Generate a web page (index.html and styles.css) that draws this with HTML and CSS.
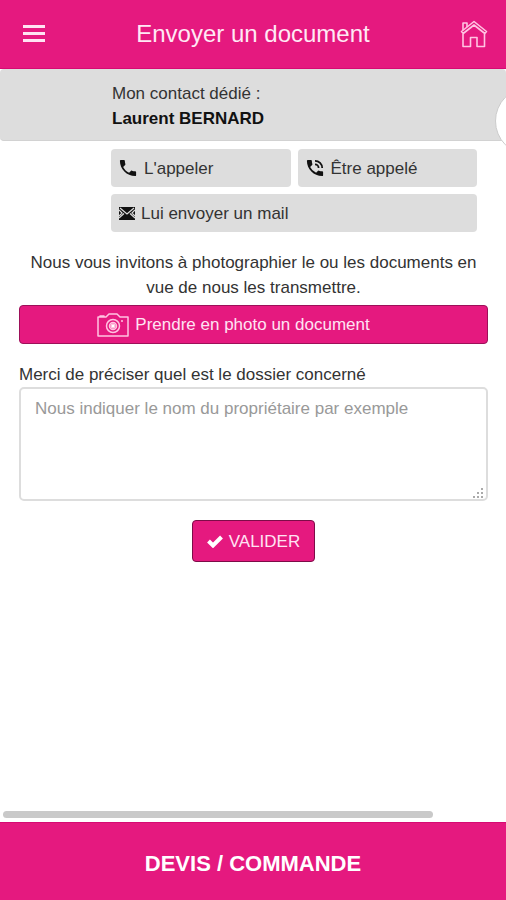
FILE: index.html
```html
<!DOCTYPE html>
<html lang="fr">
<head>
<meta charset="utf-8">
<meta name="viewport" content="width=device-width, initial-scale=1">
<title>Envoyer un document</title>
<link rel="stylesheet" href="styles.css">
</head>
<body>
<header class="topbar">
  <button class="icon-button" type="button" aria-label="Menu">
    <svg width="24" height="18" viewBox="0 0 24 18" fill="#ffe3f3"><path d="M1 0h22v3H1zM1 7h22v3H1zM1 14h22v3H1z"/></svg>
  </button>
  <h1 class="title">Envoyer un document</h1>
  <a class="icon-button" href="#" aria-label="Accueil">
    <svg width="28" height="28" viewBox="0 0 28 28" fill="none" stroke="#ffc4e2" stroke-width="1.6" stroke-linejoin="round"><path d="M3 14v12.500h7.500v-9h6.500v9h7.500V14"/><path d="M14 1.500 1.500 11.500l1.700 2L14 5l10.800 8.500 1.700-2z"/><path d="M3 10V3h4v4"/></svg>
  </a>
</header>
<main class="content">
  <section class="contact">
    <p class="contact-label">Mon contact dédié :</p>
    <p class="contact-name">Laurent BERNARD</p>
  </section>
  <span class="bubble"></span>
  <div class="actions">
    <button class="action" type="button">
      <svg width="18" height="18" viewBox="2 2 20 20" fill="#111"><path d="M6.620 10.790c1.440 2.830 3.760 5.140 6.590 6.590l2.200-2.200c.27-.27.67-.36 1.020-.24 1.120.37 2.330.57 3.570.57.55 0 1 .45 1 1V20c0 .55-.45 1-1 1C10.610 21 3 13.390 3 4c0-.55.45-1 1-1h3.500c.55 0 1 .45 1 1 0 1.250.2 2.450.57 3.570.11.35.03.74-.25 1.020z"/></svg>
      <span>L'appeler</span>
    </button>
    <button class="action" type="button">
      <svg width="18" height="18" viewBox="2 2 20 20" fill="#111"><path d="M20 15.500c-1.250 0-2.450-.2-3.570-.57a1 1 0 0 0-1.020.24l-2.200 2.200a15 15 0 0 1-6.590-6.590l2.200-2.200c.28-.27.36-.66.25-1.010A11.400 11.400 0 0 1 8.500 4c0-.55-.45-1-1-1H4c-.55 0-1 .45-1 1 0 9.390 7.610 17 17 17 .55 0 1-.45 1-1v-3.500c0-.55-.45-1-1-1zM19 12h2a9 9 0 0 0-9-9v2a7 7 0 0 1 7 7zm-4 0h2a5 5 0 0 0-5-5v2a3 3 0 0 1 3 3z"/></svg>
      <span>Être appelé</span>
    </button>
    <button class="action action-wide" type="button">
      <svg width="16" height="13" viewBox="0 0 16 13"><path fill="#111" d="M0 0h16v13H0z"/><path d="M1 1l7 6 7-6M0 11l5-4.500M16 11l-5-4.500M0 3l3 3-3 3M16 3l-3 3 3 3" fill="none" stroke="#ddd" stroke-width="1.200"/></svg>
      <span>Lui envoyer un mail</span>
    </button>
  </div>
  <form class="form">
    <p class="intro">Nous vous invitons à photographier le ou les documents en vue de nous les transmettre.</p>
    <button class="primary photo" type="button">
      <svg width="32" height="24" viewBox="0 0 32 24" fill="none" stroke="#ffc4e2" stroke-width="1.500" stroke-linejoin="round"><path d="M1 4h8l3-3h8l3 3h8v19H1zM3 4V3h4v1"/><circle cx="16" cy="13" r="6.500"/><circle cx="16" cy="13" r="3.500"/><circle cx="16" cy="13" r="2" fill="#fff"/><path d="M24 8h2"/></svg>
      <span>Prendre en photo un document</span>
    </button>
    <label class="label" for="dossier">Merci de préciser quel est le dossier concerné</label>
    <div class="field">
      <textarea class="textarea" id="dossier" placeholder="Nous indiquer le nom du propriétaire par exemple"></textarea>
      <svg class="grip" width="11" height="10" viewBox="0 0 11 10" fill="#aaa"><path d="M8 0h2v2H8zM4 4h2v2H4zM8 4h2v2H8zM0 8h2v2H0zM4 8h2v2H4zM8 8h2v2H8z"/></svg>
    </div>
    <button class="primary submit" type="button">
      <svg width="16" height="13" viewBox="0 0 16 13" fill="none" stroke="#fff" stroke-width="4"><path d="M1.500 6l4.500 4.500L14.500 2"/></svg>
      <span>VALIDER</span>
    </button>
  </form>
</main>
<div class="scroll"><div class="scroll-thumb"></div></div>
<footer class="footer"><a class="order" href="#">DEVIS / COMMANDE</a></footer>
</body>
</html>
```
FILE: styles.css
```css
* { box-sizing: border-box; }

body {
  margin: 0;
  min-height: 100vh;
  display: flex;
  flex-direction: column;
  background: #fff;
  color: #333;
  font: 17px/25px "Liberation Sans", Arial, sans-serif;
}

p, h1 { margin: 0; }
button, textarea { font: inherit; }
svg { display: block; flex: none; }

.topbar {
  display: flex;
  align-items: center;
  justify-content: space-between;
  height: 69px;
  padding: 0 18px 0 22px;
  background: #e5197f;
  border-bottom: 1px solid #d60a73;
}

.icon-button {
  padding: 0;
  border: 0;
  background: none;
}

.title {
  color: #ffe9f5;
  font-size: 24px;
  font-weight: 400;
  line-height: 32px;
}

.content {
  position: relative;
  flex: 1;
  overflow: hidden;
}

.contact {
  padding: 12px 16px 9px 112px;
  background: #ddd;
  border-bottom: 1px solid #d2d2d2;
  border-radius: 4px;
}

.contact-name {
  color: #111;
  font-weight: 700;
}

.bubble {
  position: absolute;
  top: 18px;
  right: -57px;
  width: 68px;
  height: 68px;
  border: 1px solid #ccc;
  border-radius: 50%;
  background: #fff;
}

.actions {
  display: grid;
  grid-template-columns: 1fr 1fr;
  gap: 7px;
  padding: 8px 29px 0 111px;
}

.action {
  display: flex;
  align-items: center;
  gap: 7px;
  height: 38px;
  padding: 0 8px;
  border: 0;
  border-radius: 4px;
  background: #ddd;
  color: #333;
}

.action-wide {
  grid-column: 1 / -1;
  gap: 6px;
}

.form {
  display: flex;
  flex-direction: column;
  padding: 18px 18px 0 19px;
}

.intro { text-align: center; }

.primary {
  display: flex;
  align-items: center;
  justify-content: center;
  gap: 6px;
  border: 1px solid #9c1059;
  border-radius: 4px;
  background: #e5197f;
  color: #ffe3f3;
}

.photo {
  height: 39px;
  margin-top: 5px;
  padding: 0 40px 0 0;
}

.label { margin-top: 18px; }

.field {
  position: relative;
  display: flex;
}

.textarea {
  flex: 1;
  height: 114px;
  padding: 7px 14px;
  border: 2px solid #ddd;
  border-radius: 5px;
  background: #fff;
  color: #333;
  resize: none;
}

.textarea::placeholder { color: #999; opacity: 1; }

.grip {
  position: absolute;
  right: 4px;
  bottom: 3px;
}

.submit {
  align-self: center;
  height: 42px;
  margin-top: 19px;
  padding: 0 14px;
  border-color: #7d0c48;
}

.scroll { padding: 0 73px 4px 3px; }

.scroll-thumb {
  height: 7px;
  border-radius: 4px;
  background: #c9c9c9;
}

.footer {
  display: flex;
  align-items: center;
  justify-content: center;
  height: 78px;
  padding-top: 4px;
  background: #e5197f;
  border-top: 1px solid #d60a73;
}

.order {
  color: #fff;
  font-size: 22px;
  font-weight: 700;
  line-height: 28px;
  text-decoration: none;
}
```
